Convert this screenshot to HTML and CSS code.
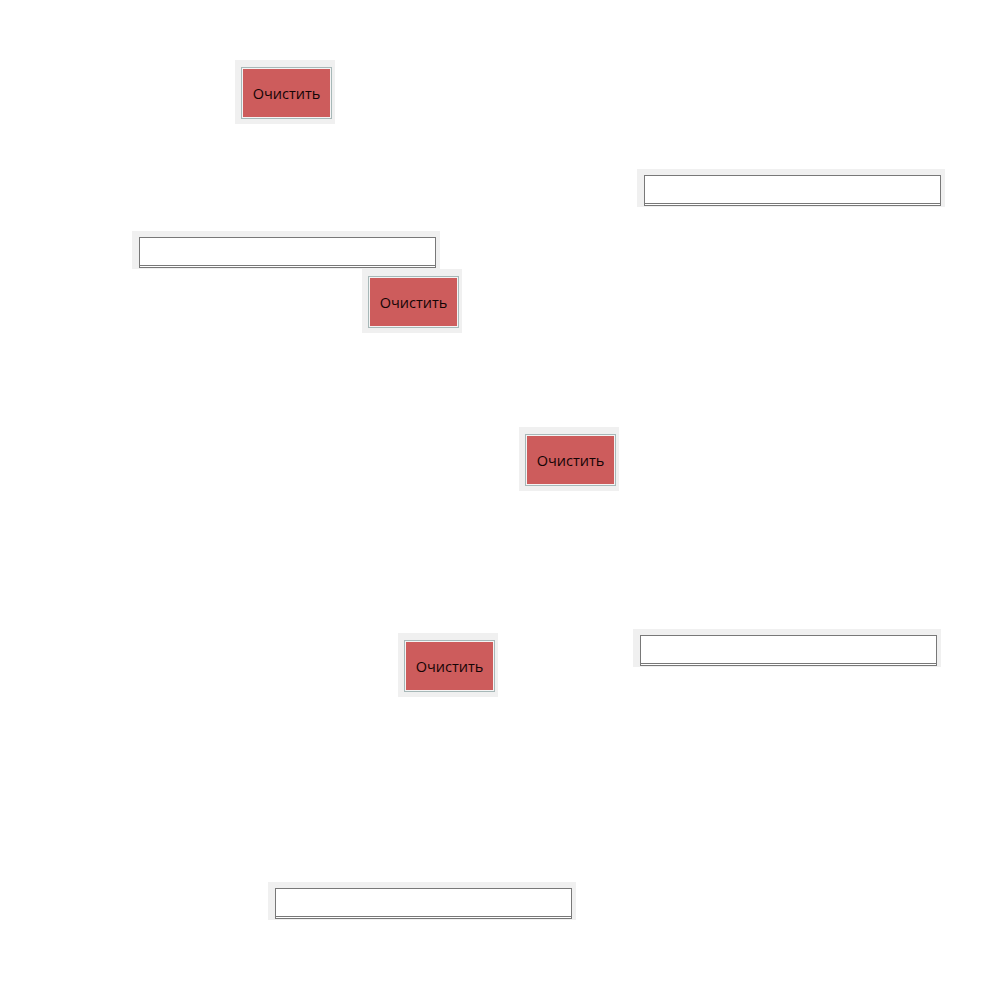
FILE: index.html
```html
<!DOCTYPE html>
<html lang="ru">
<head>
<meta charset="utf-8">
<link rel="stylesheet" href="styles.css">
</head>
<body>
<div class="canvas">
  <div class="widget btn-wrap" style="left:235px;top:60px"><button class="clear-btn">Очистить</button></div>
  <div class="widget field-wrap" style="left:637px;top:169px"><input class="field" type="text"></div>
  <div class="widget field-wrap" style="left:132px;top:231px"><input class="field" type="text"></div>
  <div class="widget btn-wrap" style="left:362px;top:269px"><button class="clear-btn">Очистить</button></div>
  <div class="widget btn-wrap" style="left:519px;top:427px"><button class="clear-btn">Очистить</button></div>
  <div class="widget btn-wrap" style="left:398px;top:633px"><button class="clear-btn">Очистить</button></div>
  <div class="widget field-wrap" style="left:633px;top:629px"><input class="field" type="text"></div>
  <div class="widget field-wrap" style="left:268px;top:882px"><input class="field" type="text"></div>
</div>
</body>
</html>
```
FILE: styles.css
```css
html, body {
  margin: 0;
  padding: 0;
  background: #ffffff;
}
.canvas {
  position: relative;
  width: 1000px;
  height: 1000px;
  font-family: "Open Sans", "Noto Sans", sans-serif;
}
.widget {
  position: absolute;
  box-sizing: border-box;
  background: #f0f0f0;
}
.btn-wrap {
  width: 100px;
  height: 64px;
  padding: 7px 3px 5px 6px;
  display: flex;
}
.clear-btn {
  flex: 1;
  margin: 0;
  box-sizing: border-box;
  border: 1px solid #a7b8b8;
  box-shadow: inset 0 0 0 1px #f4f4f4;
  background: #cd5c5c;
  color: #140505;
  font-family: "Open Sans", "Noto Sans", sans-serif;
  font-size: 14.5px;
  padding: 0;
}
.field-wrap {
  width: 308px;
  height: 38px;
  padding: 6px 4px 3px 7px;
  display: flex;
}
.field {
  flex: 1;
  margin: 0;
  box-sizing: border-box;
  height: 31px;
  border: 1px solid #787878;
  border-bottom: 3px double #787878;
  background: #ffffff;
  padding: 0;
  outline: none;
}
```
